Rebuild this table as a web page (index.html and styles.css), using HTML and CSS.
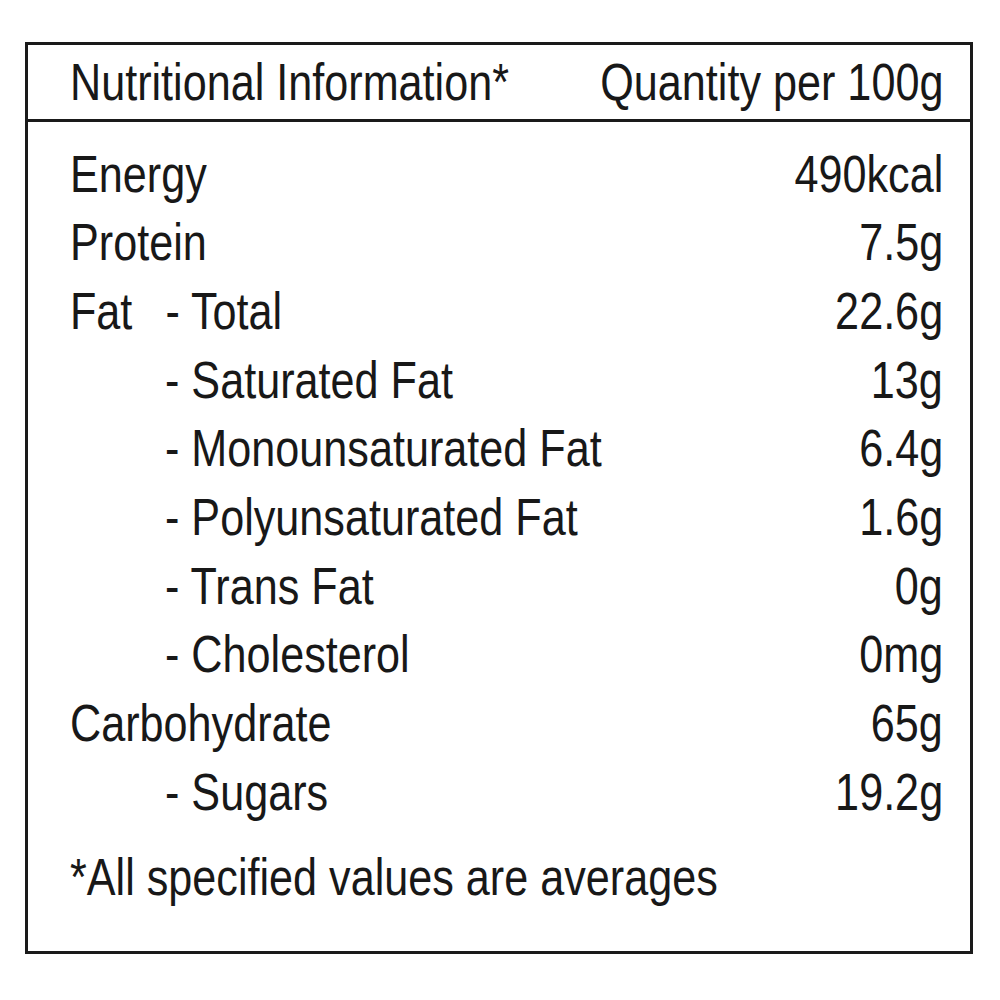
FILE: index.html
```html
<!DOCTYPE html>
<html lang="en">
<head>
<meta charset="utf-8">
<title>Nutritional Information</title>
<link rel="stylesheet" href="styles.css">
</head>
<body>
<div class="panel">
  <div class="head">
    <span class="txt">Nutritional Information*</span>
    <span class="txt val">Quantity per 100g</span>
  </div>
  <div class="body">
    <div class="row"><span class="txt">Energy</span><span class="txt val">490kcal</span></div>
    <div class="row"><span class="txt">Protein</span><span class="txt val">7.5g</span></div>
    <div class="row"><span class="txt lab"><span class="group">Fat</span><span>- Total</span></span><span class="txt val">22.6g</span></div>
    <div class="row sub"><span class="txt">- Saturated Fat</span><span class="txt val">13g</span></div>
    <div class="row sub"><span class="txt">- Monounsaturated Fat</span><span class="txt val">6.4g</span></div>
    <div class="row sub"><span class="txt">- Polyunsaturated Fat</span><span class="txt val">1.6g</span></div>
    <div class="row sub"><span class="txt">- Trans Fat</span><span class="txt val">0g</span></div>
    <div class="row sub"><span class="txt">- Cholesterol</span><span class="txt val">0mg</span></div>
    <div class="row"><span class="txt">Carbohydrate</span><span class="txt val">65g</span></div>
    <div class="row sub"><span class="txt">- Sugars</span><span class="txt val">19.2g</span></div>
    <p class="note"><span class="txt">*All specified values are averages</span></p>
  </div>
</div>
</body>
</html>
```
FILE: styles.css
```css
html, body {
  margin: 0;
  padding: 0;
  background: #ffffff;
}
body {
  font-family: "Liberation Sans", Arial, sans-serif;
  font-size: 52px;
  color: #181818;
}
.panel {
  box-sizing: border-box;
  margin: 42px 0 0 25px;
  width: 948px;
  height: 912px;
  border: 3px solid #1a1a1a;
}
.head {
  display: grid;
  grid-template-columns: minmax(0, 1fr) auto;
  align-items: center;
  height: 74px;
  padding: 0 27px 0 42px;
  line-height: 60px;
  border-bottom: 3px solid #1a1a1a;
}
.body {
  padding: 17.6px 27px 0 42px;
}
.row {
  display: grid;
  grid-template-columns: minmax(0, 1fr) auto;
  height: 68.7px;
  line-height: 68.7px;
}
.row.sub {
  padding-left: 95px;
}
.txt {
  display: inline-block;
  white-space: nowrap;
  transform: scaleX(0.83);
  transform-origin: left center;
  justify-self: start;
}
.txt.val {
  transform-origin: right center;
  justify-self: end;
}
.lab {
  display: flex;
}
.group {
  width: 115px;
}
.note {
  margin: 17px 0 0 0;
  line-height: 68.7px;
}
```
